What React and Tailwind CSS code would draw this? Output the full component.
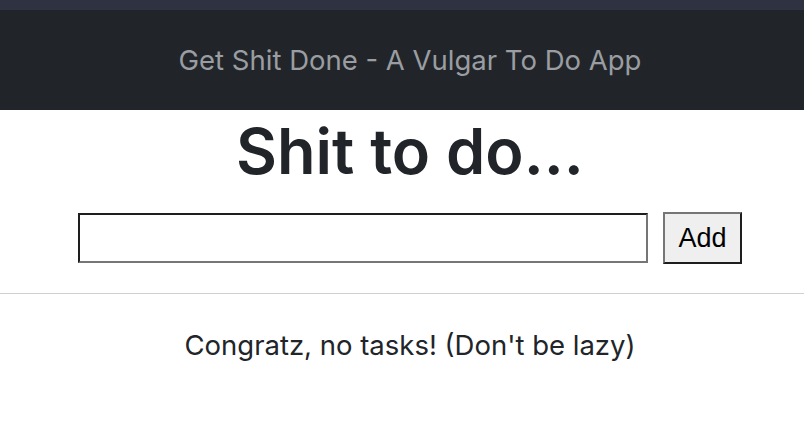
import React, { useState } from 'react';

const App = () => {
  const [taskText, setTaskText] = useState("");
  const [tasks, setTasks] = useState([]);

  const addTask = () => {
    if (!taskText.trim()) return;
    setTasks([...tasks, taskText.trim()]);
    setTaskText("");
  };

  return (
    <div className="min-h-[440px] bg-white font-['Inter',sans-serif] text-[#212529]">
      {/* top strip */}
      <div className="h-[10px] bg-[#2f3241]" />

      {/* Navbar */}
      <nav className="h-[100px] bg-[#212529] flex items-center justify-center pl-[16px] pt-[2px]">
        <span className="text-[27.5px] text-[#9a9da1]">Get Shit Done - A Vulgar To Do App</span>
      </nav>

      {/* Header + form */}
      <div className="flex flex-col items-center pl-[16px]">
        <h1 className="text-[63px] font-semibold leading-[78px] mt-[2px]">Shit to do...</h1>
        <div className="flex items-center gap-[15px] mt-[22px]">
          <input
            type="text"
            value={taskText}
            onChange={(e) => setTaskText(e.target.value)}
            className="w-[570px] h-[50px] bg-white border-2 border-t-[#1e1e1e] border-l-[#1e1e1e] border-b-[#767676] border-r-[#767676] px-2 text-[26px] outline-none"
          />
          <button
            onClick={addTask}
            className="w-[79px] h-[52px] bg-[#efefef] border-2 border-t-[#767676] border-l-[#767676] border-b-[#1e1e1e] border-r-[#1e1e1e] text-[27px] text-black font-['Liberation_Sans',sans-serif]"
          >
            Add
          </button>
        </div>
      </div>

      <hr className="mt-[29px] border-t border-[#d0d0d0]" />

      {/* Task list */}
      <div className="flex flex-col items-center mt-[33px] pl-[16px]">
        {tasks.length === 0 ? (
          <p className="text-[27.5px] leading-[36px]">Congratz, no tasks! (Don't be lazy)</p>
        ) : (
          tasks.map((task, i) => (
            <p key={i} className="text-[27.5px] leading-[36px]">{task}</p>
          ))
        )}
      </div>
    </div>
  );
};

export default App;
